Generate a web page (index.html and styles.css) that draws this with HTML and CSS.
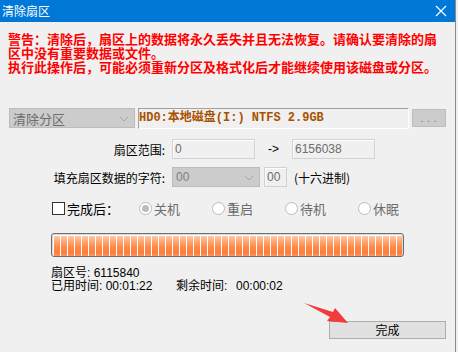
FILE: index.html
```html
<!DOCTYPE html>
<html>
<head>
<meta charset="utf-8">
<link rel="stylesheet" href="styles.css">
</head>
<body>
<div class="window">
  <div class="titlebar">
    <span class="title">清除扇区</span>
    <svg class="close" width="12" height="12" viewBox="0 0 12 12"><path d="M1 1 L11 11 M11 1 L1 11" stroke="#fff" stroke-width="1.2" fill="none"/></svg>
  </div>
  <div class="warning">警告：清除后，扇区上的数据将永久丢失并且无法恢复。请确认要清除的扇区中没有重要数据或文件。<br>执行此操作后，可能必须重新分区及格式化后才能继续使用该磁盘或分区。</div>

  <div class="row row1">
    <div class="combo combo-mode"><span>清除分区</span><svg class="chev" width="10" height="6" viewBox="0 0 10 6"><path d="M1 1 L5 5 L9 1" stroke="#a6a6a6" fill="none"/></svg></div>
    <div class="disk">HD0:本地磁盘(I:) NTFS 2.9GB</div>
    <div class="dots">. . .</div>
  </div>

  <div class="row row2">
    <div class="label">扇区范围:</div>
    <div class="field f-start">0</div>
    <div class="to">-&gt;</div>
    <div class="field f-end">6156038</div>
  </div>

  <div class="row row3">
    <div class="label">填充扇区数据的字符:</div>
    <div class="combo combo-char"><span>00</span><svg class="chev" width="10" height="6" viewBox="0 0 10 6"><path d="M1 1 L5 5 L9 1" stroke="#a6a6a6" fill="none"/></svg></div>
    <div class="field f-hex">00</div>
    <div class="hexnote">(十六进制)</div>
  </div>

  <div class="row row4">
    <div class="check-group"><span class="checkbox"></span><span class="check-label">完成后：</span></div>
    <div class="radio"><span class="dot checked"></span><span>关机</span></div>
    <div class="radio"><span class="dot"></span><span>重启</span></div>
    <div class="radio"><span class="dot"></span><span>待机</span></div>
    <div class="radio"><span class="dot"></span><span>休眠</span></div>
  </div>

  <div class="progress"><div class="bar"></div></div>

  <div class="stats">
    <div>扇区号: 6115840</div>
    <div class="time-row"><span class="used">已用时间: 00:01:22</span><span class="remain-label">剩余时间:</span><span>00:00:02</span></div>
  </div>

  <div class="footer"><div class="btn">完成</div></div>

  <svg class="arrow" width="60" height="30" viewBox="300 298 60 30"><polygon points="304,303 333,312 335,308 348,323 327,321 330,317" fill="#f23b3b"/></svg>
</div>
</body>
</html>
```

FILE: styles.css
```css
* { box-sizing: border-box; }
html, body { margin: 0; padding: 0; background: #f0f0f0; }
body {
  font-family: "Noto Sans CJK SC", "DejaVu Sans", sans-serif;
  font-size: 12px;
  color: #000;
  width: 458px;
  height: 352px;
  overflow: hidden;
}
.window {
  position: relative;
  width: 456px;
  height: 352px;
  background: #f0f0f0;
  border-right: 1px solid #8a8a8a;
}
.titlebar {
  height: 22px;
  background: #0078d7;
  display: flex;
  align-items: center;
  justify-content: space-between;
  padding: 0 8px 0 2px;
}
.title { color: #fff; font-size: 12px; line-height: 22px; }
.close { margin-top: -1px; }
.warning {
  padding: 10px 0 0 8px;
  width: 441px;
  color: #ff0000;
  font-weight: bold;
  font-size: 13px;
  line-height: 14px;
  height: 52px;
}
.row { display: flex; align-items: center; }
.row1 { margin-top: 34px; height: 20px; padding-left: 9px; }
.combo {
  background: #cccccc;
  border: 1px solid #bcbcbc;
  color: #6d6d6d;
  display: flex;
  align-items: center;
  justify-content: space-between;
  padding: 0 5px 0 3px;
  height: 20px;
}
.combo-mode { width: 126px; font-size: 13px; }
.chev { margin-top: 1px; }
.disk {
  margin-left: 3px;
  width: 271px;
  height: 21px;
  border-top: 1px solid #a0a0a0;
  border-left: 1px solid #a0a0a0;
  border-bottom: 1px solid #fff;
  border-right: 1px solid #fff;
  color: #a85200;
  font-family: "Liberation Mono", "Noto Sans CJK SC", monospace;
  font-weight: bold;
  font-size: 12px;
  line-height: 19px;
  white-space: nowrap;
  overflow: hidden;
}
.dots {
  margin-left: 3px;
  width: 34px;
  height: 18px;
  background: #cccccc;
  border: 1px solid #bdbdbd;
  color: #7a7a7a;
  font-size: 9px;
  text-align: center;
  line-height: 18px;
  letter-spacing: 1px;
}
.row2 { margin-top: 11px; height: 20px; }
.label { width: 165px; text-align: right; font-size: 12px; }
.field {
  height: 20px;
  border: 1px solid #d2d2d2;
  box-shadow: inset 1px 1px 0 #fff;
  background: #f0f0f0;
  color: #6d6d6d;
  padding-left: 2px;
  line-height: 18px;
  font-family: "Liberation Sans", sans-serif;
  font-size: 12px;
}
.f-start { margin-left: 7px; width: 83px; }
.to { margin-left: 13px; width: 24px; font-family: "Liberation Sans", sans-serif; font-size: 12px; }
.f-end { width: 83px; }
.row3 { margin-top: 8px; height: 20px; }
.combo-char { margin-left: 7px; width: 88px; font-family: "Liberation Sans", sans-serif; color: #808080; }
.f-hex { margin-left: 4px; width: 23px; }
.hexnote { margin-left: 7px; }
.row4 { margin-top: 14px; height: 14px; padding-left: 52px; }
.check-group { width: 87px; display: flex; align-items: center; }
.checkbox { width: 13px; height: 13px; border: 1px solid #333; background: #fff; }
.check-label { margin-left: 2px; font-size: 13px; }
.radio { width: 73px; display: flex; align-items: center; color: #6d6d6d; font-size: 13px; }
.dot {
  width: 13px; height: 13px; border-radius: 50%;
  border: 1px solid #bcbcbc; background: #fff;
  margin-right: 2px;
  display: flex; align-items: center; justify-content: center;
}
.dot.checked::after {
  content: ""; width: 7px; height: 7px; border-radius: 50%; background: #bcbcbc;
}
.progress {
  margin: 18px 0 0 51px;
  width: 353px;
  height: 24px;
  border: 1px solid #6e6e6e;
  border-radius: 3px;
  box-shadow: inset 0 0 0 1px #d8d8d8;
  background: #fff;
  padding: 2px 2px 1px 2px;
}
.bar {
  height: 20px;
  width: 348px;
  background:
    repeating-linear-gradient(90deg, transparent 0 6px, #fff 6px 7px),
    linear-gradient(180deg, #ffc7a6 0%, #ffa472 30%, #ff8a48 55%, #ff7c38 85%, #ff9a64 100%);
}
.stats {
  margin: 10px 0 0 51px;
  line-height: 13px;
  font-size: 12px;
}
.stats div { font-family: "Liberation Sans", "Noto Sans CJK SC", sans-serif; }
.time-row { display: flex; }
.used { width: 125px; }
.remain-label { width: 60px; }
.footer { margin-top: 28px; padding-left: 329px; }
.btn {
  width: 117px;
  height: 18px;
  background: #e1e1e1;
  border: 1px solid #adadad;
  text-align: center;
  line-height: 16px;
  font-size: 12px;
}
.arrow { position: absolute; left: 300px; top: 298px; }
```
